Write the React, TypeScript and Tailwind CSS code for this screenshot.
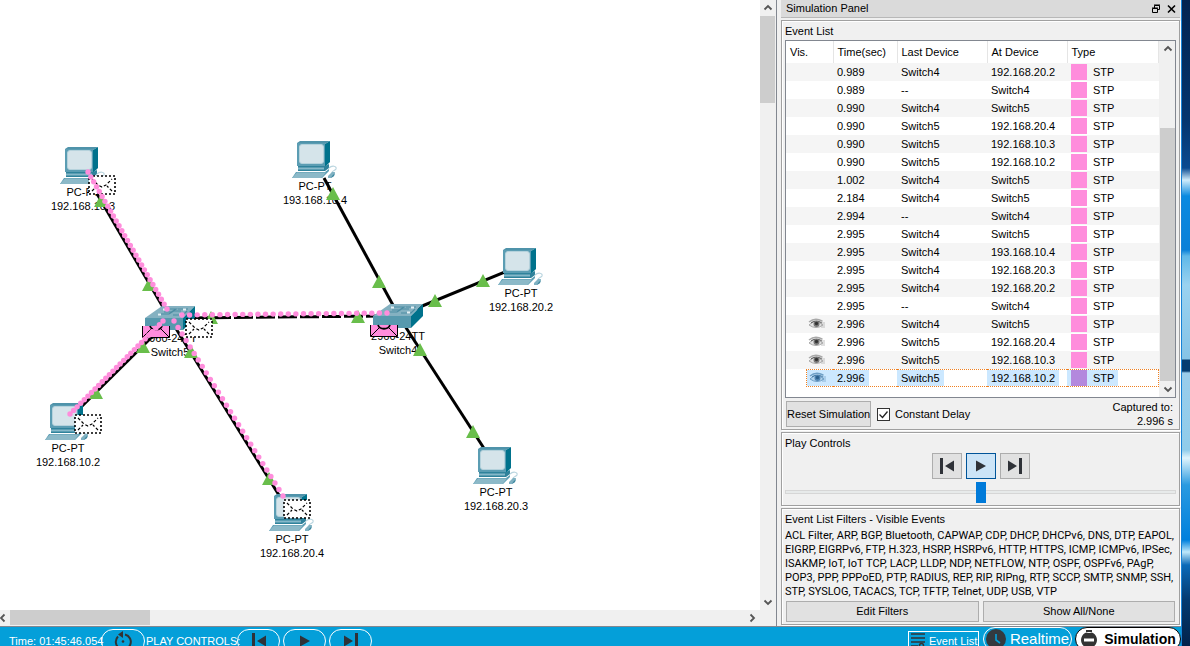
import React, { useState } from "react";

type Point = [number, number];

const PCS: { at: Point; label: string; center: Point }[] = [
  { at: [60, 147], label: "192.168.10.3", center: [83, 185] },
  { at: [292, 141], label: "193.168.10.4", center: [315, 179] },
  { at: [498, 248], label: "192.168.20.2", center: [521, 286] },
  { at: [473, 447], label: "192.168.20.3", center: [496, 485] },
  { at: [45, 403], label: "192.168.10.2", center: [68, 441] },
  { at: [269, 494], label: "192.168.20.4", center: [292, 532] },
];

const SWITCHES: { at: Point; label: string; center: Point }[] = [
  { at: [145, 306], label: "Switch5", center: [170, 331] },
  { at: [373, 304], label: "Switch4", center: [398, 329] },
];

const LINKS: { from: Point; to: Point; dash?: string }[] = [
  { from: [89, 180], to: [167, 314] },
  { from: [72, 416], to: [164, 325] },
  { from: [175, 327], to: [282, 500] },
  { from: [190, 318], to: [378, 316], dash: "19 3" },
  { from: [324, 178], to: [394, 307] },
  { from: [410, 311], to: [510, 270] },
  { from: [403, 323], to: [487, 453] },
];

const LIGHTS: Point[] = [
  [101, 207], [149, 291], [211, 324], [358, 323], [143, 353], [96, 399], [191, 358],
  [269, 485], [333, 200], [379, 288], [435, 307], [483, 287], [420, 356], [473, 438],
];

const TRAILS: { from: Point; to: Point; step: number }[] = [
  { from: [88, 172], to: [167, 309], step: 5.7 },
  { from: [182, 315], to: [387, 313], step: 7.6 },
  { from: [163, 321], to: [70, 414], step: 5 },
  { from: [174, 321], to: [283, 496], step: 7.6 },
];

const DELIVERED: Point[] = [[88, 175], [185, 318], [74, 414], [283, 499]];
const PENDING: Point[] = [[142, 326], [370, 325]];

const EVENTS: { time: string; last: string; at: string; seen?: boolean; selected?: boolean }[] = [
  { time: "0.989", last: "Switch4", at: "192.168.20.2" },
  { time: "0.989", last: "--", at: "Switch4" },
  { time: "0.990", last: "Switch4", at: "Switch5" },
  { time: "0.990", last: "Switch5", at: "192.168.20.4" },
  { time: "0.990", last: "Switch5", at: "192.168.10.3" },
  { time: "0.990", last: "Switch5", at: "192.168.10.2" },
  { time: "1.002", last: "Switch4", at: "Switch5" },
  { time: "2.184", last: "Switch4", at: "Switch5" },
  { time: "2.994", last: "--", at: "Switch4" },
  { time: "2.995", last: "Switch4", at: "Switch5" },
  { time: "2.995", last: "Switch4", at: "193.168.10.4" },
  { time: "2.995", last: "Switch4", at: "192.168.20.3" },
  { time: "2.995", last: "Switch4", at: "192.168.20.2" },
  { time: "2.995", last: "--", at: "Switch4" },
  { time: "2.996", last: "Switch4", at: "Switch5", seen: true },
  { time: "2.996", last: "Switch5", at: "192.168.20.4", seen: true },
  { time: "2.996", last: "Switch5", at: "192.168.10.3", seen: true },
  { time: "2.996", last: "Switch5", at: "192.168.10.2", seen: true, selected: true },
];

function PcIcon({ at }: { at: Point }) {
  return (
    <g transform={`translate(${at[0]} ${at[1]})`}>
      <path d="M5 2 8 0H38L33 3H5Z" fill="#4f93aa" />
      <path d="M33 3 38 0V21L33 26Z" fill="#00728c" />
      <rect x="5" y="2" width="28" height="23" fill="#5b9db3" />
      <rect x="7.5" y="3.5" width="24" height="19" rx="2.5" fill="#d5e4ea" stroke="#b5d2dc" />
      <path d="M6 25H33L37 23V27L33 30H6Z" fill="#2f829b" />
      <path d="M6 26.5H32V28.5H6Z" fill="#86b8c9" />
      <path d="M4 31H33L37 28V30L30 37H0Z" fill="#5b9db3" />
      <path d="M5 31.5H34L29.5 37H0Z" fill="#8cb9c8" />
      <path d="M37 27C40 24 45 25 44 28C43 30 40 29 40 32" fill="none" stroke="#b9d5df" strokeWidth="1.2" />
      <path d="M36 35 40 31 43 31 42 35 39 37H36Z" fill="#7fb1c2" />
      <path d="M40 35 43 32 42 35 39 37Z" fill="#3c879e" />
    </g>
  );
}

function SwitchIcon({ at }: { at: Point }) {
  return (
    <g transform={`translate(${at[0]} ${at[1]})`}>
      <path d="M17 0H50L38 12H0Z" fill="#84b1c1" />
      <path d="M0 12H38V24H0Z" fill="#5799ae" />
      <path d="M38 12 50 0V12L38 24Z" fill="#00728c" />
      <path d="M19 3H31L28 5H36M13 8H24L27 6H19M28 9H38L42 5M33 3H43" fill="none" stroke="#4d8da3" strokeWidth="1.2" />
      <path d="M18 2.5h3v2h-3zM38 2.5h3v2h-3zM13 7.5h3v2h-3zM34 7.5h3v2h-3z" fill="#e5f1f5" />
    </g>
  );
}

function Trail({ from, to, step }: { from: Point; to: Point; step: number }) {
  const dx = to[0] - from[0];
  const dy = to[1] - from[1];
  const count = Math.round(Math.hypot(dx, dy) / step);
  return (
    <g fill="#ff8ddc">
      {Array.from({ length: count + 1 }, (_, i) => (
        <circle key={i} cx={from[0] + (dx * i) / count} cy={from[1] + (dy * i) / count} r="2.7" />
      ))}
    </g>
  );
}

function DeviceLabel({ center, model, name }: { center: Point; model: string; name: string }) {
  return (
    <div
      className="absolute -translate-x-1/2 text-center leading-[14px] whitespace-nowrap"
      style={{ left: center[0], top: center[1] }}
    >
      <div>{model}</div>
      <div>{name}</div>
    </div>
  );
}

function Topology() {
  return (
    <div className="relative min-w-0 flex-1 overflow-hidden bg-white">
      {PCS.map((d) => (
        <DeviceLabel key={d.label} center={d.center} model="PC-PT" name={d.label} />
      ))}
      {SWITCHES.map((d) => (
        <DeviceLabel key={d.label} center={d.center} model="2960-24TT" name={d.label} />
      ))}
      <svg className="absolute inset-0 h-full w-full" aria-label="Network topology">
        {LINKS.map(({ from, to, dash }, i) => (
          <line key={i} x1={from[0]} y1={from[1]} x2={to[0]} y2={to[1]} stroke="#000" strokeWidth="3" strokeDasharray={dash} />
        ))}
        {PCS.map((d) => <PcIcon key={d.label} at={d.at} />)}
        {SWITCHES.map((d) => <SwitchIcon key={d.label} at={d.at} />)}
        {LIGHTS.map(([x, y], i) => (
          <path key={i} d={`M${x} ${y - 13}l7 13h-14z`} fill="#69be4b" />
        ))}
        {DELIVERED.map(([x, y], i) => (
          <g key={i} transform={`translate(${x} ${y})`} fill="none" stroke="#000">
            <rect x="1" y="1" width="26" height="18" fill="#fff" strokeWidth="1.6" strokeDasharray="2 2" />
            <path d="M4 4 10 10 14 12 18 10 24 4M4 16 9 11M24 16 19 11" strokeWidth="1.2" strokeDasharray="3 2" />
          </g>
        ))}
        {PENDING.map(([x, y], i) => (
          <g key={i} transform={`translate(${x} ${y})`}>
            <path d="M0 0H28V12H0Z" fill="#ff8ddc" />
            <path d="M.5 0V11.5H27.5V0M1 11 9 3M27 11 19 3" fill="none" stroke="#000" />
            <path d="M8 0C10 5 18 5 20 0" fill="none" stroke="#000" strokeWidth="1.8" />
          </g>
        ))}
        {TRAILS.map((t, i) => <Trail key={i} {...t} />)}
      </svg>
    </div>
  );
}

const CHEVRONS = {
  up: "M1.5 6.5 5 3 8.5 6.5",
  down: "M1.5 3.5 5 7 8.5 3.5",
  left: "M6.5 1.5 3 5 6.5 8.5",
  right: "M3.5 1.5 7 5 3.5 8.5",
};

function Arrow({ dir }: { dir: keyof typeof CHEVRONS }) {
  return (
    <button type="button" aria-label={`Scroll ${dir}`} className="flex h-4 w-[15px] shrink-0 items-center justify-center">
      <svg width="10" height="10" viewBox="0 0 10 10">
        <path d={CHEVRONS[dir]} fill="none" stroke="#555" strokeWidth="1.8" />
      </svg>
    </button>
  );
}

function Glyph({ kind }: { kind: "back" | "play" | "forward" }) {
  return (
    <svg width="18" height="18" viewBox="0 0 18 18" fill="#2f3238">
      {kind === "back" && <path d="M2 1h3v16H2zM16 3.5v11L7 9z" />}
      {kind === "play" && <path d="M4 3.5v11L14 9z" />}
      {kind === "forward" && <path d="M13 1h3v16h-3zM2 3.5v11L11 9z" />}
    </svg>
  );
}

function Eye({ selected }: { selected?: boolean }) {
  const dark = selected ? "#2c5f8c" : "#333";
  const soft = selected ? "#6f9fc6" : "#a9a9a9";
  return (
    <svg width="17" height="12" viewBox="0 0 17 12" role="img" aria-label="Visible">
      <path d="M1 4Q7-1 14 3" fill="none" stroke={soft} strokeWidth="1.5" />
      <path d="M1 7Q7 0 15 7Q8 12 1 7Z" fill={selected ? "#b4d4ee" : "#e4e4e4"} stroke={soft} />
      <path d="M3 5Q8 1 14 5" fill="none" stroke={dark} strokeWidth=".8" />
      <circle cx="8.5" cy="6" r="3" fill={selected ? "#4f84b2" : "#777"} />
      <circle cx="8.5" cy="5.5" r="1.7" fill={dark} />
      <path d="M14 2v8M16 4v6" stroke={soft} strokeWidth="1" opacity=".7" />
    </svg>
  );
}

function Group({ children }: { children: React.ReactNode }) {
  return (
    <section className="border border-[#a0a0a0] px-[3px] pt-[3px] pb-px shadow-[inset_1px_1px_0_#fff,1px_1px_0_#fff]">
      {children}
    </section>
  );
}

const HEAD = "border-r border-[#e5e5e5] pl-1 text-left font-normal";

function EventTable() {
  return (
    <div className="flex h-[358px] border border-[#828790] bg-white">
      <div className="min-w-0 flex-1 overflow-hidden">
        <table className="w-full table-fixed border-collapse">
          <colgroup>
            <col className="w-[47px]" />
            <col className="w-16" />
            <col className="w-[90px]" />
            <col className="w-20" />
            <col />
          </colgroup>
          <thead>
            <tr className="h-[22px]">
              {["Vis.", "Time(sec)", "Last Device", "At Device", "Type"].map((h) => (
                <th key={h} className={HEAD}>{h}</th>
              ))}
            </tr>
          </thead>
          <tbody>
            {EVENTS.map((e, i) => {
              const edge = e.selected ? "border-y border-dotted border-[#f08020]" : "";
              const mark = e.selected ? "bg-[#cce8ff]" : "";
              const line = `flex h-[18px] items-center ${edge}`;
              return (
                <tr key={i} className={i % 2 === 0 ? "bg-[#f5f5f5]" : "bg-white"}>
                  <td className="p-0">
                    <div className={`ml-5 ${line} ${e.selected ? "border-l" : ""}`}>
                      <div className={`flex h-4 flex-1 items-center pl-[2px] ${mark}`}>
                        {e.seen && <Eye selected={e.selected} />}
                      </div>
                    </div>
                  </td>
                  <td className="p-0">
                    <div className={line}>
                      <span className={`h-4 px-1 leading-4 ${mark}`}>{e.time}</span>
                    </div>
                  </td>
                  <td className="p-0">
                    <div className={line}>
                      <span className={`h-4 px-1 leading-4 ${mark}`}>{e.last}</span>
                    </div>
                  </td>
                  <td className="p-0">
                    <div className={line}>
                      <span className={`h-4 px-1 leading-4 ${mark}`}>{e.at}</span>
                    </div>
                  </td>
                  <td className="p-0">
                    <div className={`${line} ${e.selected ? "border-r" : ""}`}>
                      <span className={`flex h-4 items-center gap-1.5 px-1 leading-4 ${mark}`}>
                        <i className={`h-4 w-4 ${e.selected ? "bg-[#b388dd]" : "bg-[#ff8ddc]"}`} />
                        STP
                      </span>
                    </div>
                  </td>
                </tr>
              );
            })}
          </tbody>
        </table>
      </div>
      <div className="flex w-4 flex-col bg-[#f0f0f0] pl-px">
        <Arrow dir="up" />
        <div className="h-[71px]" />
        <div className="flex-1 bg-[#cdcdcd]" />
        <Arrow dir="down" />
      </div>
    </div>
  );
}

const BUTTON = "border border-[#adadad] bg-[#e1e1e1] text-center";

function SimulationPanel() {
  const [constant, setConstant] = useState(true);
  return (
    <aside className="flex w-[405px] shrink-0 flex-col gap-[2px] border-l border-[#828790] bg-[#f0f0f0] pr-px pl-1">
      <header className="flex h-[18px] items-center border-b border-[#b8b8b8] bg-[#dadada] pl-[5px]">
        <h2 className="flex-1">Simulation Panel</h2>
        <button type="button" aria-label="Float panel" className="mr-1.5">
          <svg width="10" height="10" viewBox="0 0 10 10" fill="none" stroke="#000">
            <path d="M3.5 4V1.5h5v4H7M3 1h6" />
            <path d="M1.5 4.5h5v4h-5zM1 4h6" />
          </svg>
        </button>
        <button type="button" aria-label="Close panel" className="mr-1">
          <svg width="9" height="10" viewBox="0 0 9 10" stroke="#000" strokeWidth="1.6">
            <path d="M1 1.5 8 8.5M8 1.5 1 8.5" />
          </svg>
        </button>
      </header>

      <Group>
        <h3 className="h-4 leading-[15px]">Event List</h3>
        <EventTable />
        <div className="flex items-center pt-[2px] pl-px">
          <button type="button" className={`h-[26px] w-[85px] whitespace-nowrap ${BUTTON}`}>Reset Simulation</button>
          <label className="ml-1.5 flex flex-1 items-center gap-[5px]">
            <input
              type="checkbox"
              checked={constant}
              onChange={(e) => setConstant(e.target.checked)}
              className="peer sr-only"
            />
            <span className="flex h-[13px] w-[13px] items-center justify-center border border-[#333] bg-white text-transparent peer-checked:text-[#222]">
              <svg width="11" height="11" viewBox="0 0 11 11">
                <path d="M1.5 5.5 4.5 8.5 9.5 2.5" fill="none" stroke="currentColor" strokeWidth="1.3" />
              </svg>
            </span>
            Constant Delay
          </label>
          <p className="pr-[3px] text-right leading-[14px]">Captured to:<br />2.996 s</p>
        </div>
      </Group>

      <Group>
        <h3 className="leading-[15px]">Play Controls</h3>
        <div className="mt-[2px] flex justify-center gap-1">
          <button type="button" aria-label="Step back" className={`flex h-[26px] w-[30px] items-center justify-center ${BUTTON}`}><Glyph kind="back" /></button>
          <button type="button" aria-label="Play" className="flex h-[26px] w-[30px] items-center justify-center border border-[#005499] bg-[#cce4f7]"><Glyph kind="play" /></button>
          <button type="button" aria-label="Step forward" className={`flex h-[26px] w-[30px] items-center justify-center ${BUTTON}`}><Glyph kind="forward" /></button>
        </div>
        <input
          type="range"
          aria-label="Play speed"
          defaultValue={50}
          className="mt-[2px] mb-px block h-[22px] w-full appearance-none bg-transparent [&::-webkit-slider-runnable-track]:h-1 [&::-webkit-slider-runnable-track]:border [&::-webkit-slider-runnable-track]:border-[#d6d6d6] [&::-webkit-slider-runnable-track]:bg-[#e7eaea] [&::-webkit-slider-thumb]:-mt-[9px] [&::-webkit-slider-thumb]:h-[21px] [&::-webkit-slider-thumb]:w-[10px] [&::-webkit-slider-thumb]:appearance-none [&::-webkit-slider-thumb]:bg-[#007ad9]"
        />
      </Group>

      <Group>
        <h3 className="leading-[15px]">Event List Filters - Visible Events</h3>
        <p className="pt-[2px] font-[Roboto,'Liberation_Sans',sans-serif] leading-[14px] whitespace-nowrap">
          ACL Filter, ARP, BGP, Bluetooth, CAPWAP, CDP, DHCP, DHCPv6, DNS, DTP, EAPOL,<br />
          EIGRP, EIGRPv6, FTP, H.323, HSRP, HSRPv6, HTTP, HTTPS, ICMP, ICMPv6, IPSec,<br />
          ISAKMP, IoT, IoT TCP, LACP, LLDP, NDP, NETFLOW, NTP, OSPF, OSPFv6, PAgP,<br />
          POP3, PPP, PPPoED, PTP, RADIUS, REP, RIP, RIPng, RTP, SCCP, SMTP, SNMP, SSH,<br />
          STP, SYSLOG, TACACS, TCP, TFTP, Telnet, UDP, USB, VTP
        </p>
        <div className="flex gap-1 px-px pt-[2px] pb-px">
          <button type="button" className={`h-[21px] flex-1 ${BUTTON}`}>Edit Filters</button>
          <button type="button" className={`h-[21px] flex-1 ${BUTTON}`}>Show All/None</button>
        </div>
      </Group>
    </aside>
  );
}

const PILL = "flex h-6 shrink-0 items-center justify-center rounded-full border border-white";

function StatusBar() {
  return (
    <footer className="flex h-5 shrink-0 items-start overflow-hidden border-t border-[#828790] bg-[#049fd9] text-white">
      <div className="flex pt-[2px] pl-[9px]">
        <span className="w-[92px] leading-6 whitespace-nowrap">Time: 01:45:46.054</span>
        <button type="button" aria-label="Reset time" className={`w-11 ${PILL}`}>
          <svg width="20" height="20" viewBox="0 0 20 20" fill="none" stroke="#333" strokeWidth="2">
            <path d="M12 3.5A7.5 7.5 0 1 1 5 5.5" />
            <path d="M5 3.5 10 0V7Z" fill="#333" stroke="none" />
            <circle cx="10" cy="10.5" r="1.3" fill="#333" stroke="none" />
          </svg>
        </button>
        <span className="w-[92px] pl-px leading-6 whitespace-nowrap">PLAY CONTROLS:</span>
        <div className="flex gap-[3px]">
          <button type="button" aria-label="Back" className={`w-[43px] ${PILL}`}><Glyph kind="back" /></button>
          <button type="button" aria-label="Play" className={`w-[43px] ${PILL}`}><Glyph kind="play" /></button>
          <button type="button" aria-label="Forward" className={`w-[43px] ${PILL}`}><Glyph kind="forward" /></button>
        </div>
      </div>
      <div className="ml-auto flex gap-[3px]">
        <button type="button" className="mt-1 mr-px flex h-5 w-[71px] items-center gap-1 border border-white pl-[2px] leading-5 whitespace-nowrap">
          <svg width="14" height="18" viewBox="0 0 14 18" className="shrink-0" fill="none" stroke="#333" strokeWidth="1.6">
            <path d="M0 2H14M0 6H14M0 10H14M0 14H7" />
            <circle cx="10.5" cy="13.5" r="2" />
          </svg>
          Event List
        </button>
        <button type="button" className={`w-[89px] gap-1 text-[15px] leading-4 ${PILL}`}>
          <svg width="20" height="20" viewBox="0 0 20 20" className="shrink-0">
            <circle cx="10" cy="10" r="10" fill="#333a40" />
            <path d="M10 5V11L14 14" fill="none" stroke="#049fd9" strokeWidth="1.6" />
          </svg>
          Realtime
        </button>
        <button type="button" className="flex h-6 w-[106px] shrink-0 items-center justify-center gap-1.5 rounded-full border border-black bg-white text-[14px] leading-4 font-bold text-black">
          <svg width="18" height="20" viewBox="0 0 18 20" className="shrink-0" fill="#333">
            <path d="M6 1h6v3H6zM9 3a8 8 0 1 0 .01 0zM4 9.500h10v3H4z" fillRule="evenodd" />
          </svg>
          Simulation
        </button>
      </div>
    </footer>
  );
}

export default function App() {
  return (
    <div className="flex h-screen overflow-hidden bg-[#f0f0f0] font-['Liberation_Sans',Arial,sans-serif] text-[11px] text-black">
      <div className="flex min-w-0 flex-1 flex-col">
        <main className="flex min-h-0 flex-1">
          <div className="flex min-w-0 flex-1 flex-col">
            <div className="flex min-h-0 flex-1">
              <Topology />
              <div className="mr-px flex w-[15px] shrink-0 flex-col bg-[#f0f0f0]">
                <Arrow dir="up" />
                <div className="h-[87px] bg-[#cdcdcd]" />
                <div className="flex-1" />
                <Arrow dir="down" />
              </div>
            </div>
            <div className="mb-px flex h-[15px] shrink-0 items-center bg-[#f0f0f0] pr-[17px]">
              <div className="flex w-[10px] justify-end"><Arrow dir="left" /></div>
              <div className="h-full w-[140px] bg-[#cdcdcd]" />
              <div className="flex-1" />
              <Arrow dir="right" />
            </div>
          </div>
          <SimulationPanel />
        </main>
        <StatusBar />
      </div>
      <div className="w-[9px] shrink-0 border-l border-[#1883d7] bg-[linear-gradient(to_bottom,#032350_0px,#04356e_120px,#0a4a90_168px,#d0ecfa_180px,#0a8ae0_196px,#0a80d8_250px,#5fb8e8_256px,#9ad2f0_285px,#86c3e6_359px,#043c70_360px,#043c70_371px,#9acdeb_373px,#90ccea_450px,#e0f4fc_458px,#2a9ae0_485px,#0080dd_540px,#bfe8fa_552px,#0a6ab8_565px,#043a70_600px,#02224a_646px)]" />
    </div>
  );
}
